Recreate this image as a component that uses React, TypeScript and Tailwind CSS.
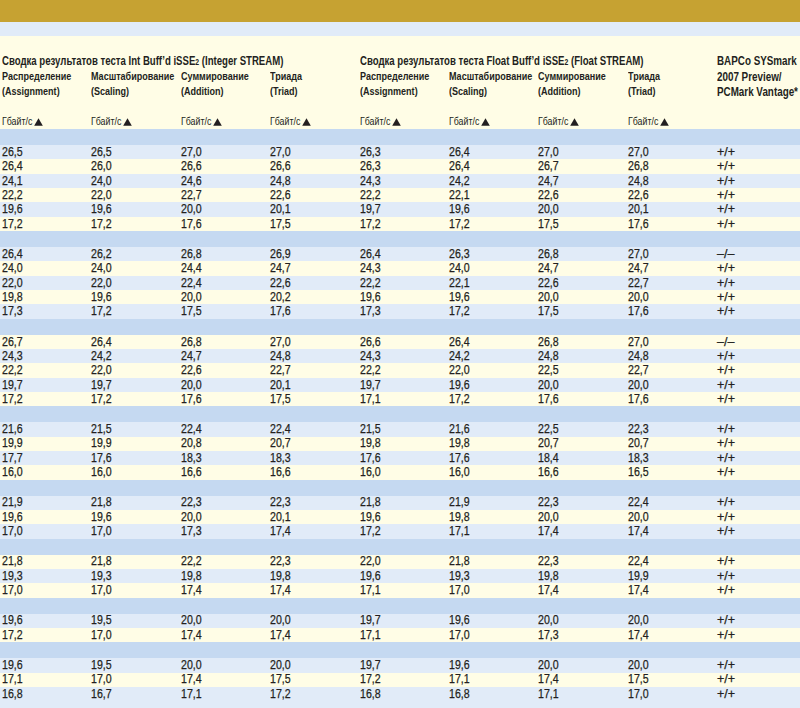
import React from "react";

type Row = [string, string, string, string, string, string, string, string, string];

const groups: Row[][] = [
  [
    ["26,5", "26,5", "27,0", "27,0", "26,3", "26,4", "27,0", "27,0", "+/+"],
    ["26,4", "26,0", "26,6", "26,6", "26,3", "26,4", "26,7", "26,8", "+/+"],
    ["24,1", "24,0", "24,6", "24,8", "24,3", "24,2", "24,7", "24,8", "+/+"],
    ["22,2", "22,0", "22,7", "22,6", "22,2", "22,1", "22,6", "22,6", "+/+"],
    ["19,6", "19,6", "20,0", "20,1", "19,7", "19,6", "20,0", "20,1", "+/+"],
    ["17,2", "17,2", "17,6", "17,5", "17,2", "17,2", "17,5", "17,6", "+/+"],
  ],
  [
    ["26,4", "26,2", "26,8", "26,9", "26,4", "26,3", "26,8", "27,0", "–/–"],
    ["24,0", "24,0", "24,4", "24,7", "24,3", "24,0", "24,7", "24,7", "+/+"],
    ["22,0", "22,0", "22,4", "22,6", "22,2", "22,1", "22,6", "22,7", "+/+"],
    ["19,8", "19,6", "20,0", "20,2", "19,6", "19,6", "20,0", "20,0", "+/+"],
    ["17,3", "17,2", "17,5", "17,6", "17,3", "17,2", "17,5", "17,6", "+/+"],
  ],
  [
    ["26,7", "26,4", "26,8", "27,0", "26,6", "26,4", "26,8", "27,0", "–/–"],
    ["24,3", "24,2", "24,7", "24,8", "24,3", "24,2", "24,8", "24,8", "+/+"],
    ["22,2", "22,0", "22,6", "22,7", "22,2", "22,0", "22,5", "22,7", "+/+"],
    ["19,7", "19,7", "20,0", "20,1", "19,7", "19,6", "20,0", "20,0", "+/+"],
    ["17,2", "17,2", "17,6", "17,5", "17,1", "17,2", "17,6", "17,6", "+/+"],
  ],
  [
    ["21,6", "21,5", "22,4", "22,4", "21,5", "21,6", "22,5", "22,3", "+/+"],
    ["19,9", "19,9", "20,8", "20,7", "19,8", "19,8", "20,7", "20,7", "+/+"],
    ["17,7", "17,6", "18,3", "18,3", "17,6", "17,6", "18,4", "18,3", "+/+"],
    ["16,0", "16,0", "16,6", "16,6", "16,0", "16,0", "16,6", "16,5", "+/+"],
  ],
  [
    ["21,9", "21,8", "22,3", "22,3", "21,8", "21,9", "22,3", "22,4", "+/+"],
    ["19,6", "19,6", "20,0", "20,1", "19,6", "19,8", "20,0", "20,0", "+/+"],
    ["17,0", "17,0", "17,3", "17,4", "17,2", "17,1", "17,4", "17,4", "+/+"],
  ],
  [
    ["21,8", "21,8", "22,2", "22,3", "22,0", "21,8", "22,3", "22,4", "+/+"],
    ["19,3", "19,3", "19,8", "19,8", "19,6", "19,3", "19,8", "19,9", "+/+"],
    ["17,0", "17,0", "17,4", "17,4", "17,1", "17,0", "17,4", "17,4", "+/+"],
  ],
  [
    ["19,6", "19,5", "20,0", "20,0", "19,7", "19,6", "20,0", "20,0", "+/+"],
    ["17,2", "17,0", "17,4", "17,4", "17,1", "17,0", "17,3", "17,4", "+/+"],
  ],
  [
    ["19,6", "19,5", "20,0", "20,0", "19,7", "19,6", "20,0", "20,0", "+/+"],
    ["17,1", "17,0", "17,4", "17,5", "17,2", "17,1", "17,4", "17,5", "+/+"],
    ["16,8", "16,7", "17,1", "17,2", "16,8", "16,8", "17,1", "17,0", "+/+"],
  ],
];

const labels: [string, string][] = [
  ["Распределение", "(Assignment)"],
  ["Масштабирование", "(Scaling)"],
  ["Суммирование", "(Addition)"],
  ["Триада", "(Triad)"],
];

function N({ children }: { children: React.ReactNode }) {
  return <span className="inline-block origin-left scale-x-[0.82] whitespace-nowrap">{children}</span>;
}

function Tri() {
  return (
    <svg width="9" height="8" viewBox="0 0 9 8" className="ml-[3px] inline-block">
      <path d="M4.5 0.3 L8.8 7.7 L0.2 7.7 Z" fill="#231f20" />
    </svg>
  );
}

function Title({ kind, stream }: { kind: string; stream: string }) {
  return (
    <div className="col-span-4 text-[12px] font-bold leading-[15px]">
      <span className="inline-block origin-left scale-x-[0.8] whitespace-nowrap">
        Сводка результатов теста {kind} Buff’d iSSE<span className="text-[8.5px]">2</span> ({stream} STREAM)
      </span>
    </div>
  );
}

export default function App() {
  let idx = 0;
  return (
    <div className="h-[708px] w-[800px] overflow-hidden bg-[#e1ebf8] font-['Liberation_Sans',Arial,sans-serif] text-[#231f20]">
      <div className="h-[22px] bg-[#c6a232]" />
      <div className="h-[14px] bg-[#e1ebf8]" />
      <div className="grid h-[93px] grid-cols-[repeat(8,89.375px)_1fr] grid-rows-[15px_30px_15px_15px] bg-[#fffde6] pl-[2px] pt-[18px]">
        <Title kind="Int" stream="Integer" />
        <Title kind="Float" stream="Float" />
        <div className="col-start-9 row-span-3 row-start-1 flex flex-col text-[12px] font-bold leading-[15.5px]">
          <N>BAPCo SYSmark</N>
          <N>2007 Preview/</N>
          <N>PCMark Vantage*</N>
        </div>
        {[0, 1].map((g) =>
          labels.map(([a, b]) => (
            <div key={g + a} className="row-start-2 flex flex-col text-[11px] font-bold leading-[15px]">
              <N>{a}</N>
              <N>{b}</N>
            </div>
          ))
        )}
        {Array.from({ length: 8 }).map((_, i) => (
          <div key={i} className="row-start-4 flex items-center text-[11px] leading-[15px]">
            <span className="inline-block w-[29px] origin-left scale-x-[0.8] whitespace-nowrap">Гбайт/с</span>
            <Tri />
          </div>
        ))}
      </div>
      {groups.map((rows, gi) => (
        <div key={gi}>
          <div className="h-[16px] bg-[#c5d9f1]" />
          {rows.map((r, ri) => {
            const blue = idx++ % 2 === 0;
            return (
              <div
                key={ri}
                className={
                  blue
                    ? "grid h-[14.33px] grid-cols-[repeat(8,89.375px)_1fr] items-center bg-[#e1ebf8] pl-[2px] text-[12.5px] leading-none [-webkit-text-stroke:0.25px]"
                    : "grid h-[14.33px] grid-cols-[repeat(8,89.375px)_1fr] items-center bg-[#fffde6] pl-[2px] text-[12.5px] leading-none [-webkit-text-stroke:0.25px]"
                }
              >
                {r.slice(0, 8).map((v, ci) => (
                  <div key={ci}>
                    <span className="inline-block origin-left scale-x-[0.85] whitespace-nowrap">{v}</span>
                  </div>
                ))}
                <div className="whitespace-nowrap">{r[8]}</div>
              </div>
            );
          })}
        </div>
      ))}
    </div>
  );
}
